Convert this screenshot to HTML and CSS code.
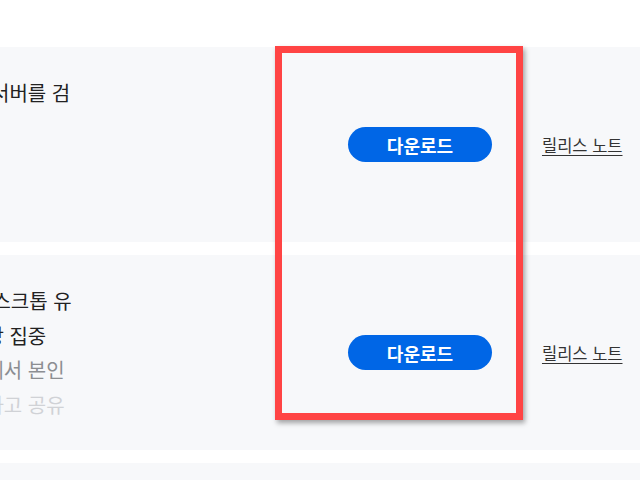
FILE: index.html
```html
<!DOCTYPE html>
<html lang="ko">
<head>
<meta charset="utf-8">
<link rel="stylesheet" href="styles.css">
</head>
<body>
<main class="list">
  <section class="row">
    <div class="desc">
      <p class="line">내 웹 서버를 검</p>
    </div>
    <a class="btn" href="#">다운로드</a>
    <a class="notes" href="#">릴리스 노트</a>
  </section>
  <section class="row">
    <div class="desc">
      <p class="line">PC 데스크톱 유</p>
      <p class="line">및 중앙 집중</p>
      <p class="line fade1">웹 앱에서 본인</p>
      <p class="line fade2">및 답하고 공유</p>
    </div>
    <a class="btn" href="#">다운로드</a>
    <a class="notes" href="#">릴리스 노트</a>
  </section>
  <section class="row"></section>
</main>
<div class="highlight"></div>
</body>
</html>
```
FILE: styles.css
```css
html, body {
  margin: 0;
  padding: 0;
  background: #ffffff;
  overflow: hidden;
  width: 640px;
  height: 480px;
}
body {
  font-family: "Noto Sans CJK KR", "Noto Sans", sans-serif;
  color: #222222;
  position: relative;
}
.list {
  display: flex;
  flex-direction: column;
  gap: 13px;
  padding-top: 47px;
}
.row {
  background: #f7f8fa;
  height: 195px;
  display: grid;
  grid-template-columns: 1fr 144px auto;
  column-gap: 50px;
  align-items: center;
  padding-right: 17.5px;
}
.desc {
  align-self: start;
  margin-left: -57px;
  padding-top: 29px;
  white-space: nowrap;
  min-width: 0;
}
.line {
  margin: 0;
  font-size: 20px;
  line-height: 34.5px;
  color: #222222;
}
.line.fade1 { color: #8c8e92; }
.line.fade2 { color: #d0d2d6; }
.btn {
  display: flex;
  align-items: center;
  justify-content: center;
  height: 35px;
  border-radius: 18px;
  background: #0066e6;
  color: #ffffff;
  font-size: 18px;
  font-weight: 700;
  text-decoration: none;
}
.notes {
  font-size: 16.5px;
  color: #333333;
  text-decoration: underline;
  text-underline-offset: 3px;
}
.highlight {
  position: absolute;
  left: 275px;
  top: 46px;
  width: 234px;
  height: 360px;
  border: 7px solid #ff4444;
  box-shadow: 2px 3px 5px rgba(0, 0, 0, 0.35);
}
```
